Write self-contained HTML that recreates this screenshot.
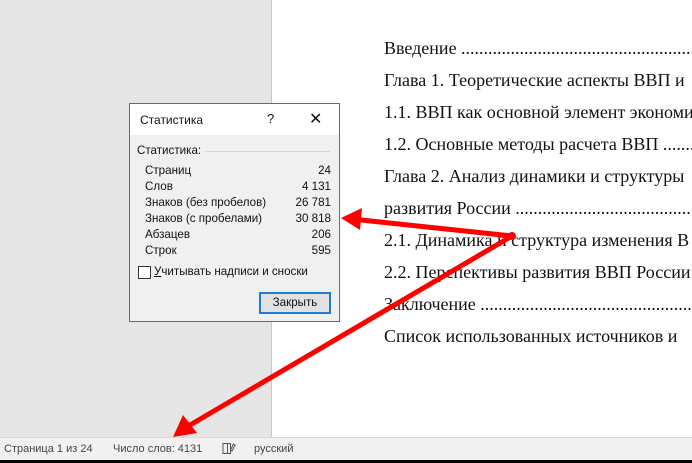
<!DOCTYPE html>
<html><head><meta charset="utf-8"><style>
body{margin:0;width:692px;height:463px;overflow:hidden;position:relative;background:#fff;font-family:"Liberation Sans",sans-serif}
#left{position:absolute;left:0;top:0;width:271px;height:437px;background:#e6e6e6;border-right:1px solid #c8c8c8}
.doc{position:absolute;left:384px;font-family:"Liberation Serif",serif;font-size:18px;color:#111;white-space:nowrap}
#status{position:absolute;left:0;top:437px;width:692px;height:22px;background:#f1f1f1;border-top:1px solid #d9d9d9;font-size:11px;color:#444}
#status span{position:absolute;top:5px}
#black{position:absolute;left:0;top:460px;width:692px;height:3px;background:#000}
#dlg{position:absolute;left:129px;top:103px;width:209px;height:217px;background:#f0f0f0;border:1px solid #1a7fd4;font-size:11.6px;color:#111}
#tb{height:31px;background:#fff;position:relative}
.r{position:absolute;left:15px;right:8px}
.r b{font-weight:normal;position:absolute;right:0}
</style></head><body>
<div id="left"></div>
<div class="doc" style="top:38px">Введение .........................................................</div>
<div class="doc" style="top:70px">Глава 1. Теоретические аспекты ВВП и</div>
<div class="doc" style="top:102px">1.1. ВВП как основной элемент экономи</div>
<div class="doc" style="top:134px">1.2. Основные методы расчета ВВП ........</div>
<div class="doc" style="top:166px">Глава 2. Анализ динамики и структуры</div>
<div class="doc" style="top:198px">развития России ..........................................</div>
<div class="doc" style="top:230px">2.1. Динамика и структура изменения В</div>
<div class="doc" style="top:262px">2.2. Перспективы развития ВВП России</div>
<div class="doc" style="top:294px">Заключение ......................................................</div>
<div class="doc" style="top:326px">Список использованных источников и</div>
<div id="dlg">
<div id="tb"><span style="position:absolute;left:10px;top:9px;font-size:12px">Статистика</span><span style="position:absolute;left:137px;top:7px;font-size:13px">?</span><span style="position:absolute;left:179px;top:5px;font-size:16px">✕</span></div>
<div style="position:absolute;left:7px;top:40px">Статистика:</div>
<div style="position:absolute;left:75px;right:9px;top:47px;border-top:1px solid #d5d5d5"></div>
<div class="r" style="top:60px">Страниц<b>24</b></div>
<div class="r" style="top:76px">Слов<b>4 131</b></div>
<div class="r" style="top:92px">Знаков (без пробелов)<b>26 781</b></div>
<div class="r" style="top:108px">Знаков (с пробелами)<b>30 818</b></div>
<div class="r" style="top:124px">Абзацев<b>206</b></div>
<div class="r" style="top:140px">Строк<b>595</b></div>
<div style="position:absolute;left:8px;top:162px;width:11px;height:11px;border:1px solid #333;background:#fff"></div>
<div style="position:absolute;left:24px;top:161px"><u>У</u>читывать надписи и сноски</div>
<div style="position:absolute;left:129px;top:188px;border:2px solid #1a7fd4;background:#e1e1e1;text-align:center;line-height:18px;box-sizing:border-box;width:72px;height:22px">Закрыть</div>
</div>
<div id="status"><span style="left:4px">Страница 1 из 24</span><span style="left:113px">Число слов: 4131</span><span style="left:254px">русский</span>
<svg style="position:absolute;left:222px;top:4px" width="14" height="13" fill="none" stroke="#555" stroke-width="1"><path d="M1 1.5h4.5v10H1zM5.5 1.5h3v10h-3M10 9l3-6-1.5-1-3 6z"/></svg></div>
<div id="black"></div>
<svg width="692" height="463" style="position:absolute;left:0;top:0">
<g stroke="#f00" stroke-width="5" stroke-linecap="round" fill="#f00">
<line x1="512" y1="236" x2="352" y2="219"/>
<line x1="512" y1="236" x2="185" y2="428"/>
</g>
<polygon fill="#f00" points="341,218 362,208 360,230"/>
<polygon fill="#f00" points="173,437 183,415 197,433"/>
<circle cx="512" cy="236" r="4" fill="#f00"/>
</svg>
</body></html>
